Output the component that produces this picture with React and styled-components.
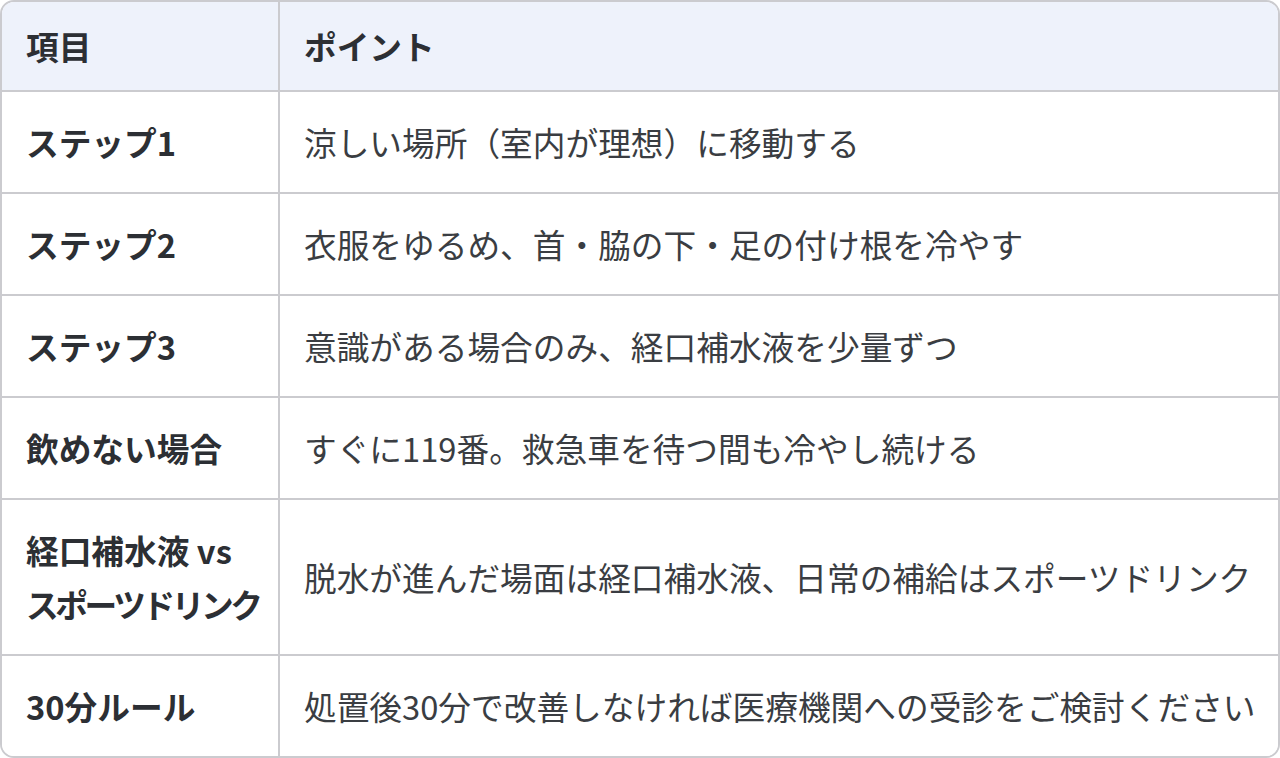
import React from "react";
import styled, { createGlobalStyle } from "styled-components";

const Global = createGlobalStyle`
  html, body { margin: 0; padding: 0; background: #ffffff; }
  body { font-family: "Noto Sans CJK JP", "Noto Sans", sans-serif; }
`;

const Wrapper = styled.div`
  width: 1280px;
  box-sizing: border-box;
  border: 2px solid #cbcbcf;
  border-radius: 14px;
  overflow: hidden;
  background: #ffffff;
`;

const Grid = styled.div`
  display: grid;
  grid-template-columns: 278px 1fr;
`;

const Cell = styled.div`
  box-sizing: border-box;
  display: flex;
  align-items: center;
  padding: ${(p) => (p.$head ? "17px 24px" : "23px 24px")};
  background: ${(p) => (p.$head ? "#eef2fb" : "#ffffff")};
  border-bottom: ${(p) => (p.$last ? "none" : "2px solid #cbcbcf")};
  border-right: ${(p) => (p.$first ? "2px solid #cbcbcf" : "none")};
  font-size: 32.7px;
  line-height: 54px;
  font-weight: ${(p) => (p.$bold ? 700 : 400)};
  color: ${(p) => (p.$bold ? "#2c2f34" : "#3a3d42")};
  white-space: nowrap;
`;

const Tight = styled.span`
  letter-spacing: -3.4px;
`;

const rows = [
  ["ステップ1", "涼しい場所（室内が理想）に移動する"],
  ["ステップ2", "衣服をゆるめ、首・脇の下・足の付け根を冷やす"],
  ["ステップ3", "意識がある場合のみ、経口補水液を少量ずつ"],
  ["飲めない場合", "すぐに119番。救急車を待つ間も冷やし続ける"],
  [["経口補水液 vs", "スポーツドリンク"], "脱水が進んだ場面は経口補水液、日常の補給はスポーツドリンク"],
  ["30分ルール", "処置後30分で改善しなければ医療機関への受診をご検討ください"],
];

export default function App() {
  return (
    <>
      <Global />
      <Wrapper>
        <Grid>
          <Cell $head $first $bold>項目</Cell>
          <Cell $head $bold>ポイント</Cell>
          {rows.map(([label, point], i) => {
            const last = i === rows.length - 1;
            return (
              <React.Fragment key={i}>
                <Cell $first $bold $last={last}>
                  {Array.isArray(label) ? (
                    <span>
                      {label[0]}
                      <br />
                      <Tight>{label[1]}</Tight>
                    </span>
                  ) : (
                    label
                  )}
                </Cell>
                <Cell $last={last}>{point}</Cell>
              </React.Fragment>
            );
          })}
        </Grid>
      </Wrapper>
    </>
  );
}
